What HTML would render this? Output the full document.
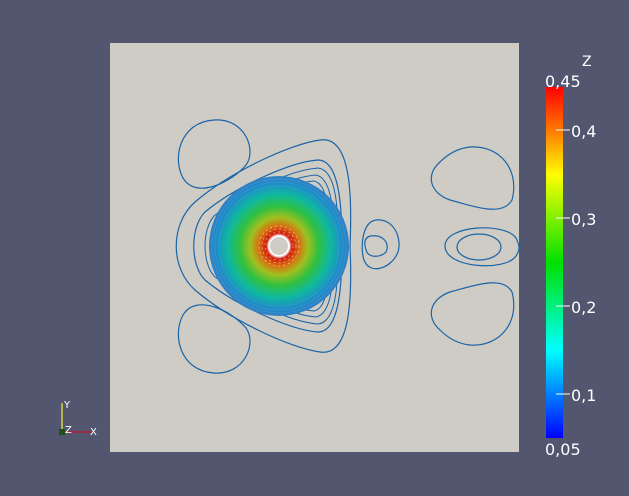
<!DOCTYPE html>
<html><head><style>
body{margin:0;width:629px;height:496px;background:#52576f;overflow:hidden;font-family:"DejaVu Sans","Liberation Sans",sans-serif;}
</style></head><body>
<svg width="629" height="496" viewBox="0 0 629 496" style="position:absolute;left:0;top:0">
<defs>
<radialGradient id="g" cx="279" cy="246" r="72" gradientUnits="userSpaceOnUse">
<stop offset="0" stop-color="#ffffff"/>
<stop offset="0.14" stop-color="#ffffff"/>
<stop offset="0.18" stop-color="#d01808"/>
<stop offset="0.28" stop-color="#d87010"/>
<stop offset="0.4" stop-color="#a0c020"/>
<stop offset="0.55" stop-color="#30c040"/>
<stop offset="0.72" stop-color="#10b8a0"/>
<stop offset="0.88" stop-color="#1c8cc8"/>
<stop offset="1" stop-color="#3a7cc0"/>
</radialGradient>
<linearGradient id="cb" x1="0" y1="0" x2="0" y2="1">
<stop offset="0" stop-color="#ff0000"/>
<stop offset="0.13" stop-color="#ff8000"/>
<stop offset="0.25" stop-color="#ffff00"/>
<stop offset="0.5" stop-color="#00e000"/>
<stop offset="0.75" stop-color="#00ffff"/>
<stop offset="1" stop-color="#0000ff"/>
</linearGradient>
</defs>
<rect x="110" y="43" width="409" height="409" fill="#cfccc5"/>
<g fill="none" stroke="#1a64a8" stroke-width="1.2">
<path d="M214 120 C245 118 257 150 246 165 C232 182 196 200 183 178 C172 158 180 122 214 120Z"/>
<path d="M214 373 C245 375 257 343 246 328 C232 311 196 293 183 315 C172 335 180 371 214 373Z"/>
<path d="M320 140 C352 135 352 200 350 246 C352 292 352 357 320 352 C290 348 230 320 195 290 C170 268 170 224 195 202 C230 172 290 144 320 140Z"/>
<path d="M318 160 C340 160 342 210 342 246 C342 282 340 332 318 332 C290 330 235 305 205 280 C190 265 190 227 205 212 C235 187 290 162 318 160Z"/>
<path d="M376 220 C395 218 402 240 398 252 C392 268 370 276 364 260 C360 248 362 222 376 220Z"/>
<path d="M370 236 C384 234 390 244 386 252 C380 258 368 258 366 250 C364 244 364 238 370 236Z"/>
<path d="M470 147 C500 145 520 170 512 200 C502 218 470 205 450 200 C430 193 425 175 440 162 C450 152 460 148 470 147Z"/>
<path d="M470 345 C500 347 520 322 512 292 C502 274 470 287 450 292 C430 299 425 317 440 330 C450 340 460 344 470 345Z"/>
<path d="M445 246 C445 225 505 222 516 238 C520 246 520 250 516 256 C505 272 445 268 445 246Z"/>
<ellipse cx="479" cy="247" rx="22" ry="13"/>
</g>
<g fill="none" stroke="#1a64a8" stroke-width="1">
<path d="M318 168 C338 170 338 215 338 246 C338 277 338 322 318 324 C290 322 240 298 214 276 C202 262 202 230 214 216 C240 194 290 170 318 168Z"/>
<path d="M316 175 C333 178 334 218 334 246 C334 274 333 314 316 317 C290 315 245 294 220 272 C210 260 210 232 220 220 C245 198 290 177 316 175Z"/>
<path d="M314 181 C329 184 330 220 330 246 C330 272 329 308 314 311 C290 309 250 290 226 269 C217 258 217 234 226 223 C250 202 290 183 314 181Z"/>
</g>
<circle cx="279" cy="246" r="70" fill="url(#g)"/>
<g fill="none" stroke="#4a98d8" stroke-width="0.7" opacity="0.7">
<circle cx="279" cy="246" r="60"/><circle cx="279" cy="246" r="64"/><circle cx="279" cy="246" r="67"/>
</g>
<g fill="none" stroke="#ffffff" stroke-width="0.7" opacity="0.6" stroke-dasharray="2 3">
<circle cx="279" cy="246" r="14"/><circle cx="279" cy="246" r="17"/><circle cx="279" cy="246" r="20"/>
</g>
<circle cx="279" cy="246" r="9" fill="#cfccc5"/>
<rect x="546" y="87" width="17" height="351" fill="url(#cb)"/>
<g stroke="#ffffff" stroke-width="1">
<line x1="556" y1="130" x2="570" y2="130"/><line x1="556" y1="218" x2="570" y2="218"/>
<line x1="556" y1="306" x2="570" y2="306"/><line x1="556" y1="394" x2="570" y2="394"/>
</g>
<g fill="#ffffff" font-size="16">
<text x="582" y="66" font-size="14">Z</text>
<text x="545" y="87">0,45</text>
<text x="571" y="137">0,4</text>
<text x="571" y="225">0,3</text>
<text x="571" y="313">0,2</text>
<text x="571" y="401">0,1</text>
<text x="545" y="455">0,05</text>
</g>
<line x1="62" y1="432" x2="62" y2="403" stroke="#d8d040" stroke-width="1.5"/>
<line x1="62" y1="432" x2="92" y2="432" stroke="#b02030" stroke-width="1.5"/>
<rect x="59" y="429" width="6" height="6" fill="#205020"/>
<g fill="#fff" font-size="10"><text x="64" y="408">Y</text><text x="65" y="433">Z</text><text x="90" y="435">X</text></g>
</svg>
</body></html>
